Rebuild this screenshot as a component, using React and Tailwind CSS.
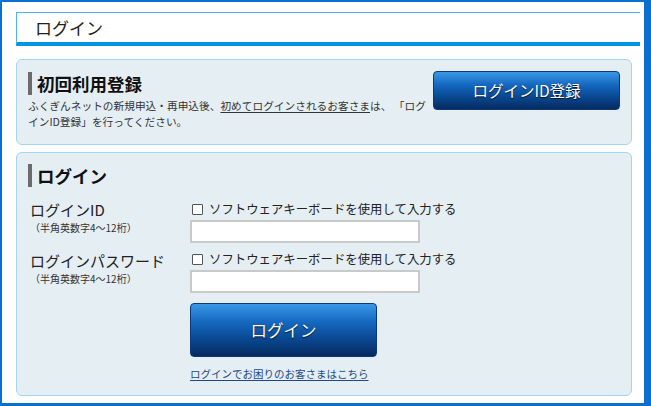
export default function App() {
  const font = { fontFamily: '"Noto Sans CJK JP", "Noto Sans", sans-serif' };
  const btn =
    "flex items-center justify-center rounded-[4px] border border-[#0a3a78] bg-[linear-gradient(to_bottom,#3a97e6_0%,#1468bf_35%,#0a4a95_65%,#052b60_100%)] text-white [text-shadow:0_1px_1px_rgba(0,0,0,0.8)]";
  return (
    <div
      style={font}
      className="w-[651px] h-[406px] box-border border-l-2 border-t-2 border-r-[7px] border-b-[3px] border-[#0a6fcf] bg-white pl-[14px] pr-[4px] pt-[10px] text-[#222]"
    >
      {/* title */}
      <div className="h-[34px] border-t border-l border-[#4ab6ee] border-b-4 border-b-[#0096e6] flex items-center pl-[18px]">
        <span className="text-[17px] leading-[20px] text-[#222]">ログイン</span>
      </div>

      {/* panel 1 */}
      <div className="mt-[13px] mr-[8px] h-[86px] rounded-[6px] border border-[#a6d5f2] bg-[#e5eef3] flex justify-between pl-[11px] pr-[11px]">
        <div className="pt-[12px]">
          <div className="flex items-center h-[23px]">
            <div className="w-[4px] h-[23px] bg-[#6b6b6b]" />
            <span className="ml-[5px] text-[17.5px] leading-[22px] font-bold text-[#111]">初回利用登録</span>
          </div>
          <div className="mt-[3px] text-[10.7px] leading-[16px] text-[#333] whitespace-nowrap">
            ふくぎんネットの新規申込・再申込後、
            <span className="underline underline-offset-2">初めてログインされるお客さま</span>
            は、 「ログ
            <br />
            インID登録」を行ってください。
          </div>
        </div>
        <div className="pt-[11px]">
          <div className={btn + " w-[187px] h-[39px] text-[15.5px]"}>ログインID登録</div>
        </div>
      </div>

      {/* panel 2 */}
      <div className="mt-[7px] mr-[8px] h-[244px] rounded-[6px] border border-[#a6d5f2] bg-[#e5eef3] pl-[11px] pt-[11px]">
        <div className="flex items-center h-[23px]">
          <div className="w-[4px] h-[23px] bg-[#6b6b6b]" />
          <span className="ml-[5px] text-[17.5px] leading-[22px] font-bold text-[#111]">ログイン</span>
        </div>
        <div className="flex mt-[14px]">
          <div className="w-[162px] pl-[2px]">
            <div className="text-[15px] leading-[18px] text-[#222]">ログインID</div>
            <div className="mt-[3px] text-[10px] leading-[12px] text-[#333]">（半角英数字4～12桁）</div>
            <div className="mt-[18px] text-[15px] leading-[18px] text-[#222]">ログインパスワード</div>
            <div className="mt-[3px] text-[10px] leading-[12px] text-[#333]">（半角英数字4～12桁）</div>
          </div>
          <div className="flex flex-col">
            <div className="flex items-center h-[17px]">
              <div className="ml-[2px] w-[11px] h-[11px] border border-[#555] bg-white rounded-[1px]" />
              <span className="ml-[6px] text-[12.4px] leading-[17px] text-[#222]">ソフトウェアキーボードを使用して入力する</span>
            </div>
            <div className="mt-[2px] w-[230px] h-[23px] border-2 border-[#c9c9c9] bg-white" />
            <div className="mt-[8px] flex items-center h-[17px]">
              <div className="ml-[2px] w-[11px] h-[11px] border border-[#555] bg-white rounded-[1px]" />
              <span className="ml-[6px] text-[12.4px] leading-[17px] text-[#222]">ソフトウェアキーボードを使用して入力する</span>
            </div>
            <div className="mt-[2px] w-[230px] h-[23px] border-2 border-[#c9c9c9] bg-white" />
            <div className={btn + " mt-[10px] w-[187px] h-[54px] text-[16.5px]"}>ログイン</div>
            <div className="mt-[9px] text-[10.5px] leading-[16px] text-[#1d4a86] underline underline-offset-2">
              ログインでお困りのお客さまはこちら
            </div>
          </div>
        </div>
      </div>
    </div>
  );
}
